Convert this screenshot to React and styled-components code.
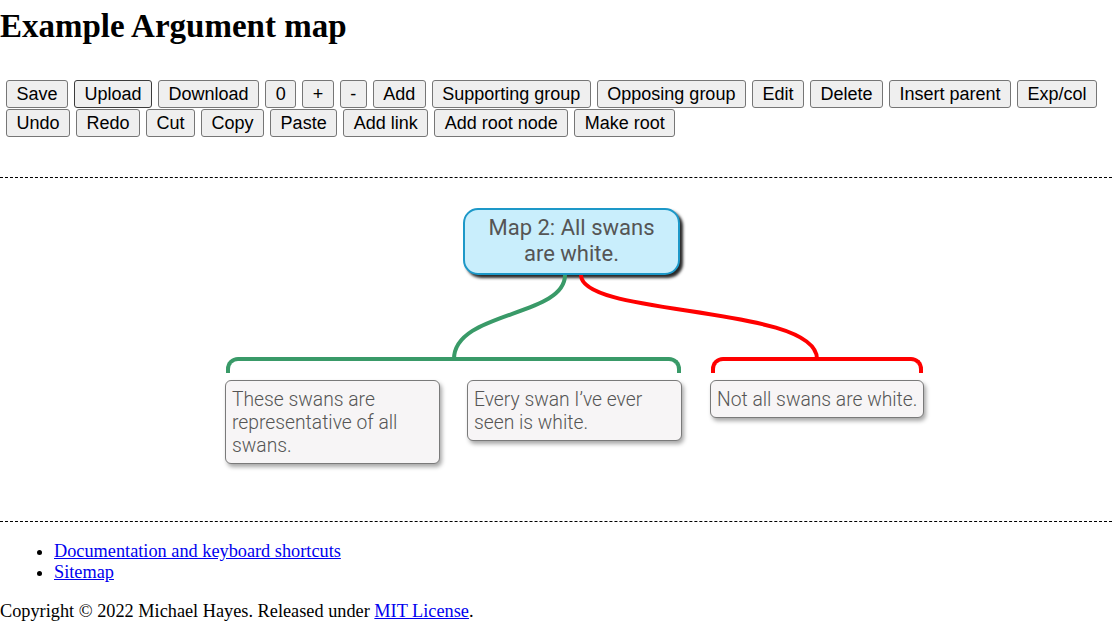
import React from 'react';
import styled, { createGlobalStyle } from 'styled-components';

const GlobalStyle = createGlobalStyle`
  body {
    margin: 0;
    font-family: 'Liberation Serif', 'Times New Roman', serif;
    font-size: 18.3px;
    color: #000;
    background: #fff;
  }
`;

const Title = styled.h1`
  margin: 7px 0 0;
  font-size: 33px;
  font-weight: 700;
  line-height: 38px;
`;

const Toolbar = styled.div`
  display: flex;
  flex-wrap: wrap;
  column-gap: 6px;
  row-gap: 1px;
  margin-top: 35px;
  padding-left: 6px;
`;

const Button = styled.button`
  font-family: 'Liberation Sans', Arial, sans-serif;
  font-size: 18px;
  line-height: 22px;
  color: #000;
  background: #efefef;
  border: 1px solid ${(p) => (p.$hover ? '#3c3c3c' : '#767676')};
  border-radius: 3px;
  padding: 2px 9.5px;
  margin: 0;
  cursor: pointer;
`;

const MapArea = styled.div`
  margin-top: 40px;
  border-top: 1px dashed #000;
  border-bottom: 1px dashed #000;
  padding: 30px 0 57px 225px;
`;

const Tree = styled.div`
  display: inline-flex;
  flex-direction: column;
`;

const RootNode = styled.div`
  box-sizing: border-box;
  width: 217px;
  margin-left: 238px;
  padding: 5px 12px 6px;
  background: #c9eefc;
  border: 2px solid #1d98c8;
  border-radius: 15px;
  box-shadow: 3px 3px 3px rgba(0, 0, 0, 0.85);
  font-family: Roboto, 'Noto Sans', sans-serif;
  font-size: 22px;
  line-height: 26px;
  color: #555;
  text-align: center;
`;

const Links = styled.svg`
  display: block;
  width: 698px;
  height: 82px;
  overflow: visible;
`;

const Groups = styled.div`
  display: flex;
  gap: 28px;
  align-items: flex-start;
`;

const Group = styled.div`
  display: flex;
  flex-direction: column;
  flex-shrink: 0;
`;

const Bracket = styled.div`
  box-sizing: border-box;
  height: 16px;
  border: 4px solid ${(p) => p.$color};
  border-bottom: none;
  border-radius: 12px 12px 0 0;
  margin: 0 1px 7px;
`;

const Cards = styled.div`
  display: flex;
  gap: 27px;
  align-items: flex-start;
`;

const Card = styled.div`
  box-sizing: border-box;
  flex-shrink: 0;
  width: ${(p) => (p.$fixed ? '215px' : 'max-content')};
  padding: 7px 6px 6px;
  background: #f7f5f6;
  border: 1px solid #7a7a7a;
  border-radius: 6px;
  box-shadow: 2px 3px 4px rgba(0, 0, 0, 0.35);
  font-family: Roboto, 'Noto Sans', sans-serif;
  font-weight: 300;
  font-size: 19.3px;
  line-height: 23px;
  color: #555;
`;

const FooterLinks = styled.ul`
  margin: 19px 0 18px;
  padding-left: 54px;
  line-height: 21px;
`;

const Link = styled.a`
  color: #0000ee;
  text-decoration: underline;
`;

const Copyright = styled.p`
  margin: 18px 0;
  line-height: 21px;
`;

const GREEN = '#399a68';
const RED = '#ff0000';

const buttons = [
  'Save', 'Upload', 'Download', '0', '+', '-', 'Add', 'Supporting group',
  'Opposing group', 'Edit', 'Delete', 'Insert parent', 'Exp/col',
  'Undo', 'Redo', 'Cut', 'Copy', 'Paste', 'Add link', 'Add root node', 'Make root',
];

export default function App() {
  return (
    <>
      <GlobalStyle />
      <Title>Example Argument map</Title>
      <Toolbar>
        {buttons.map((b) => (
          <Button key={b} $hover={b === 'Upload'}>{b}</Button>
        ))}
      </Toolbar>
      <MapArea>
        <Tree>
          <RootNode>Map 2: All swans are white.</RootNode>
          <Links viewBox="0 0 698 82">
            <path d="M340 0 C340 42, 229 36, 229 84" fill="none" stroke={GREEN} strokeWidth="4" />
            <path d="M356 0 C356 42, 592 30, 592 84" fill="none" stroke={RED} strokeWidth="4" />
          </Links>
          <Groups>
            <Group>
              <Bracket $color={GREEN} />
              <Cards>
                <Card $fixed>These swans are representative of all swans.</Card>
                <Card $fixed>Every swan I’ve ever seen is white.</Card>
              </Cards>
            </Group>
            <Group>
              <Bracket $color={RED} />
              <Cards>
                <Card>Not all swans are white.</Card>
              </Cards>
            </Group>
          </Groups>
        </Tree>
      </MapArea>
      <FooterLinks>
        <li><Link href="#">Documentation and keyboard shortcuts</Link></li>
        <li><Link href="#">Sitemap</Link></li>
      </FooterLinks>
      <Copyright>
        Copyright © 2022 Michael Hayes. Released under <Link href="#">MIT License</Link>.
      </Copyright>
    </>
  );
}
